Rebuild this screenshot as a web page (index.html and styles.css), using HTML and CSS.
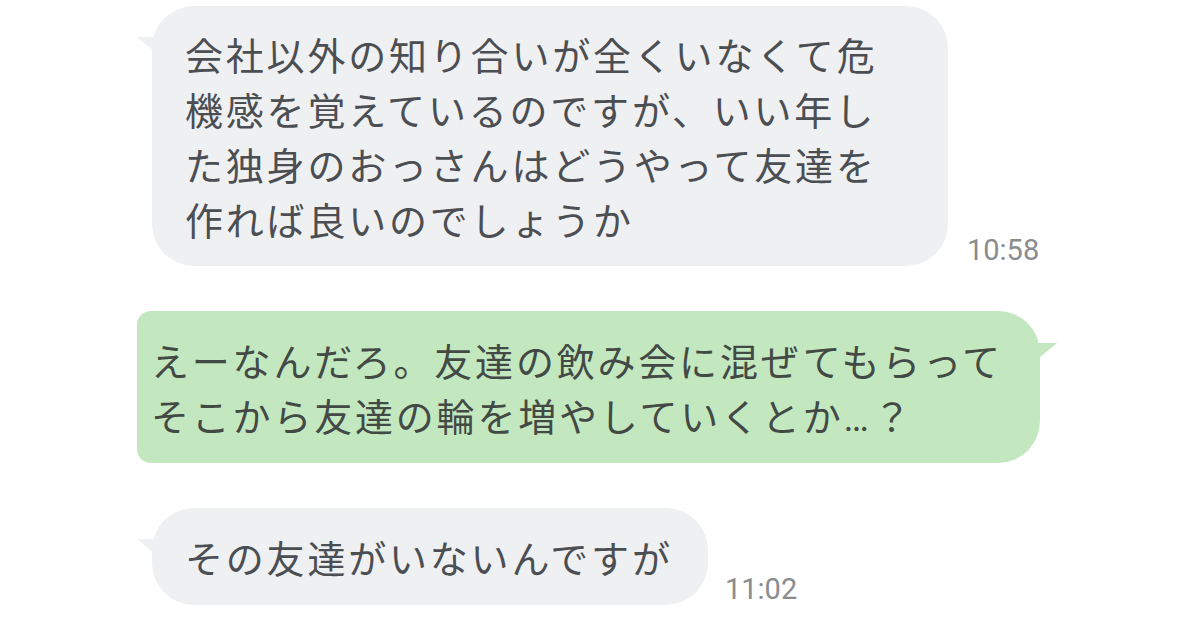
FILE: index.html
```html
<!DOCTYPE html>
<html lang="ja">
<head>
<meta charset="utf-8">
<link rel="stylesheet" href="styles.css">
</head>
<body>
<div class="chat">
  <div class="row row-in row-first">
    <div class="bubble in b1">会社以外の知り合いが全くいなくて危<br>機感を覚えているのですが、いい年し<br>た独身のおっさんはどうやって友達を<br>作れば良いのでしょうか</div>
    <div class="time">10:58</div>
  </div>
  <div class="row row-out">
    <div class="bubble out b2">えーなんだろ。友達の飲み会に混ぜてもらって<br>そこから友達の輪を増やしていくとか<span class="ell">…</span>？</div>
  </div>
  <div class="row row-in">
    <div class="bubble in b3">その友達がいないんですが</div>
    <div class="time">11:02</div>
  </div>
</div>
</body>
</html>
```
FILE: styles.css
```css
html, body {
  margin: 0;
  padding: 0;
  background: #ffffff;
}
.chat {
  width: 1200px;
  height: 630px;
  display: flex;
  flex-direction: column;
  gap: 45px;
  padding-top: 6px;
  box-sizing: border-box;
  font-family: "Noto Sans CJK JP", "Noto Sans", sans-serif;
}
.row {
  display: flex;
  align-items: flex-end;
}
.row-in {
  padding-left: 152px;
}
.row-out {
  padding-left: 137px;
}
.bubble {
  position: relative;
  box-sizing: border-box;
  font-size: 38px;
  line-height: 55px;
  letter-spacing: 2.8px;
  color: #4b4e52;
  padding: 20px 0 20px 33px;
  border-radius: 42px;
  white-space: nowrap;
}
.in {
  background: #eff0f2;
}
.out {
  background: #c3e8c0;
  color: #434a45;
  padding-left: 14px;
  border-radius: 14px 42px 42px 14px;
}
.ell {
  font-family: Roboto, "Liberation Sans", sans-serif;
  letter-spacing: 0;
  line-height: 0;
  margin-right: 4px;
}
.b1 { width: 796px; }
.b2 { width: 903px; height: 152px; padding-top: 21px; padding-bottom: 21px; }
.b3 { width: 556px; padding-top: 21px; padding-bottom: 21px; }
.in::before {
  content: "";
  position: absolute;
  left: -15px;
  top: 31px;
  width: 24px;
  height: 20px;
  background: #eff0f2;
  clip-path: polygon(0 0, 100% 0, 100% 100%);
}
.out::after {
  content: "";
  position: absolute;
  right: -17px;
  top: 32px;
  width: 24px;
  height: 20px;
  background: #c3e8c0;
  clip-path: polygon(0 0, 100% 0, 0 100%);
}
.time {
  font-family: Roboto, "Liberation Sans", sans-serif;
  font-size: 29px;
  line-height: 29px;
  color: #8a8c8e;
  margin-left: 19px;
  margin-bottom: 1px;
}
.row-in:last-child .time {
  margin-left: 17px;
}
```
